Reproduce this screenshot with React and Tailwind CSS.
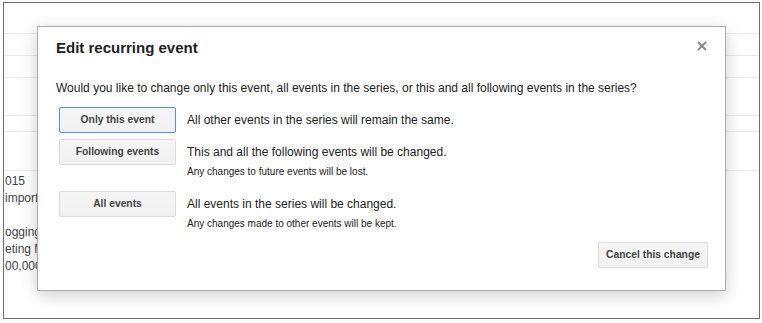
import React from 'react';

const font = { fontFamily: '"Liberation Sans", Arial, sans-serif' };

const OptionButton = ({ label, focused }) => (
  <button
    className={`w-[117px] h-[26px] shrink-0 rounded-[2px] border text-[10.3px] font-bold text-[#444] bg-gradient-to-b from-[#f5f5f5] to-[#f1f1f1] ${
      focused ? 'border-[#4d90fe]' : 'border-[#dcdcdc]'
    }`}
  >
    {label}
  </button>
);

const Option = ({ label, text, note, focused }) => (
  <div className="flex items-start">
    <OptionButton label={label} focused={focused} />
    <div className="ml-[11px]">
      <div className="leading-[26px] text-[12px] text-[#222]">{text}</div>
      {note && <div className="leading-[14px] text-[10px] text-[#222]">{note}</div>}
    </div>
  </div>
);

const BgRow = ({ h }) => <div className={`border-b border-[#ebebeb] ${h}`} />;

export default function App() {
  return (
    <div className="relative w-[762px] h-[323px] bg-white overflow-hidden" style={font}>
      {/* calendar page behind the dialog */}
      <div className="absolute left-[3px] top-[2px] w-[757px] h-[317px] border border-[#6f6f6f] bg-white overflow-hidden">
        <BgRow h="h-[31px]" />
        <BgRow h="h-[22px]" />
        <BgRow h="h-[22px]" />
        <BgRow h="h-[38px]" />
        <BgRow h="h-[16px]" />
        <div className="border-b border-[#ebebeb] h-[39px]" />
        <div className="h-[123px] pt-[2px] pl-[1px] text-[12px] leading-[17px] text-[#444] whitespace-nowrap">
          <div>015</div>
          <div>import</div>
          <div className="h-[17px]" />
          <div>ogging</div>
          <div>eting M</div>
          <div>00,000</div>
        </div>
      </div>

      {/* dialog */}
      <div className="absolute left-[37px] top-[26px] w-[689px] h-[265px] bg-white border border-[#acacac] shadow-[0_4px_16px_rgba(0,0,0,0.2)] pt-[11px] px-[18px]">
        <svg className="absolute top-[14px] right-[18px]" width="10" height="10" viewBox="0 0 10 10">
          <path d="M1 1L9 9M9 1L1 9" stroke="#8a8a8a" strokeWidth="2" />
        </svg>
        <div className="text-[15px] leading-[20px] font-bold text-[#222]">Edit recurring event</div>
        <div className="mt-[22px] text-[12px] leading-[16px] text-[#222]">
          Would you like to change only this event, all events in the series, or this and all following events in the series?
        </div>
        <div className="mt-[11px] ml-[3px] flex flex-col">
          <Option label="Only this event" text="All other events in the series will remain the same." focused />
          <div className="mt-[6px]">
            <Option
              label="Following events"
              text="This and all the following events will be changed."
              note="Any changes to future events will be lost."
            />
          </div>
          <div className="mt-[12px]">
            <Option
              label="All events"
              text="All events in the series will be changed."
              note="Any changes made to other events will be kept."
            />
          </div>
        </div>
        <div className="mt-[11px] flex justify-end mr-[-1px]">
          <button className="w-[110px] h-[26px] rounded-[2px] border border-[#dcdcdc] bg-gradient-to-b from-[#f5f5f5] to-[#f1f1f1] text-[10.3px] font-bold text-[#444]">
            Cancel this change
          </button>
        </div>
      </div>
    </div>
  );
}
